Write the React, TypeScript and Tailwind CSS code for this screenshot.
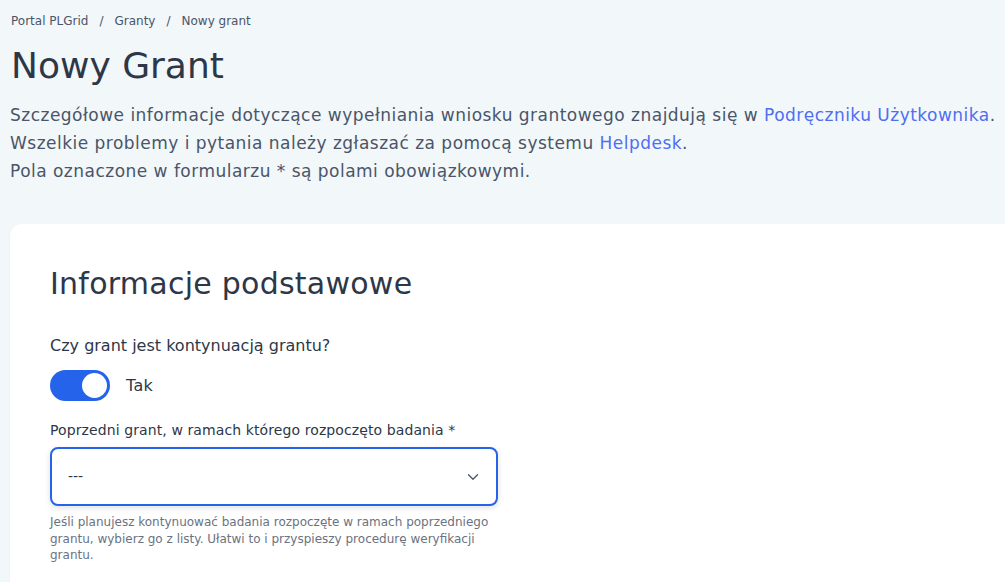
import { ChevronDown } from "lucide-react";

const font = { fontFamily: '"DejaVu Sans", "Noto Sans", sans-serif' };

export default function App() {
  return (
    <div className="min-h-[582px] overflow-hidden bg-[#f2f7fa] text-[#2d3748]" style={font}>
      <div className="pl-[10px] pt-[12px]">
        <nav className="flex items-center gap-[11px] pl-[1px] text-[12px] leading-[18px] text-[#4a5568]">
          <span>Portal PLGrid</span>
          <span>/</span>
          <span>Granty</span>
          <span>/</span>
          <span>Nowy grant</span>
        </nav>
        <h1 className="mt-[16px] pl-[1px] text-[36px] leading-[40px] text-[#2d3748]">Nowy Grant</h1>
        <div className="mt-[15px] text-[17px] leading-[28px] tracking-[0.48px] text-[#4a5568]">
          <p>
            Szczegółowe informacje dotyczące wypełniania wniosku grantowego znajdują się w{" "}
            <a className="text-[#4f6ef0]">Podręczniku Użytkownika</a>.
          </p>
          <p>
            Wszelkie problemy i pytania należy zgłaszać za pomocą systemu{" "}
            <a className="text-[#4f6ef0]">Helpdesk</a>.
          </p>
          <p>Pola oznaczone w formularzu * są polami obowiązkowymi.</p>
        </div>
      </div>

      <section className="ml-[10px] mt-[39px] min-h-[380px] rounded-tl-[12px] bg-white pl-[40px] pt-[40px] pb-[24px] shadow-[0_1px_3px_rgba(0,0,0,0.05)]">
        <h2 className="text-[30px] leading-[40px] tracking-[0.25px] text-[#2d3748]">Informacje podstawowe</h2>
        <p className="mt-[30px] text-[16px] leading-[24px] text-[#2d3748]">Czy grant jest kontynuacją grantu?</p>
        <div className="mt-[12px] flex items-center gap-[16px]">
          <div className="flex h-[31px] w-[60px] items-center justify-end rounded-full bg-[#2563eb] pr-[3px]">
            <div className="h-[25px] w-[25px] rounded-full bg-white" />
          </div>
          <span className="text-[16px] tracking-[0.3px] text-[#2d3748]">Tak</span>
        </div>
        <label className="mt-[19px] block text-[14px] font-medium leading-[20px] tracking-[0.1px] text-[#2d3748]">
          Poprzedni grant, w ramach którego rozpoczęto badania *
        </label>
        <div className="mt-[7px] flex h-[59px] w-[448px] items-center justify-between rounded-[8px] border-2 border-[#2563eb] bg-white pl-[16px] pr-[14px] shadow-[0_2px_6px_rgba(0,0,0,0.12)]">
          <span className="text-[14px] text-[#2d3748]">---</span>
          <ChevronDown className="h-[18px] w-[18px] text-[#4a5568]" strokeWidth={1.75} />
        </div>
        <p className="mt-[8px] w-[450px] text-[12px] leading-[16.5px] text-[#6b7280]">
          Jeśli planujesz kontynuować badania rozpoczęte w ramach poprzedniego grantu, wybierz go z listy. Ułatwi to i
          przyspieszy procedurę weryfikacji grantu.
        </p>
      </section>
    </div>
  );
}
